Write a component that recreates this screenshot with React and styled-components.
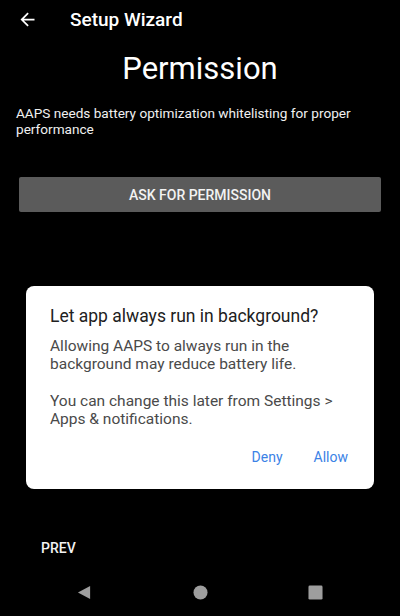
import styled, { createGlobalStyle } from "styled-components";

const GlobalStyle = createGlobalStyle`
  body {
    margin: 0;
    background: #000;
    font-family: Roboto, "Liberation Sans", sans-serif;
  }
`;

export default function App() {
  return (
    <Screen>
      <GlobalStyle />
      <TopBar>
        <BackArrow viewBox="0 0 24 24">
          <path d="M20 11H7.83l5.59-5.59L12 4l-8 8 8 8 1.41-1.41L7.83 13H20v-2z" />
        </BackArrow>
        <BarTitle>Setup Wizard</BarTitle>
      </TopBar>
      <Heading>Permission</Heading>
      <Description>
        AAPS needs battery optimization whitelisting for proper performance
      </Description>
      <AskButton>ASK FOR PERMISSION</AskButton>

      <Spacer />

      <Footer>
        <TextButton>PREV</TextButton>
      </Footer>

      <NavBar>
        <NavIcon viewBox="0 0 16 16">
          <path d="M14 1v14L1 8z" />
        </NavIcon>
        <NavIcon viewBox="0 0 16 16">
          <circle cx="8" cy="8" r="7.5" />
        </NavIcon>
        <NavIcon viewBox="0 0 16 16">
          <rect x="0.5" y="0.5" width="15" height="15" rx="1.5" />
        </NavIcon>
      </NavBar>

      {/* system dialog over the wizard */}
      <Dialog>
        <DialogTitle>Let app always run in background?</DialogTitle>
        <DialogBody>
          Allowing AAPS to always run in the background may reduce battery
          life.
        </DialogBody>
        <DialogBody $gap>
          You can change this later from Settings &gt; Apps &amp;
          notifications.
        </DialogBody>
        <DialogActions>
          <DialogAction>Deny</DialogAction>
          <DialogAction>Allow</DialogAction>
        </DialogActions>
      </Dialog>
    </Screen>
  );
}

//style
const Screen = styled.div`
  position: relative;
  width: 400px;
  height: 616px;
  background: #000;
  color: #fff;
  display: flex;
  flex-direction: column;
  overflow: hidden;
`;

const TopBar = styled.div`
  height: 38px;
  display: flex;
  align-items: center;
  padding-left: 17px;
`;

const BackArrow = styled.svg`
  width: 21px;
  height: 21px;
  fill: #fff;
`;

const BarTitle = styled.div`
  margin-left: 32px;
  font-size: 19px;
  font-weight: 500;
`;

const Heading = styled.h1`
  margin: 9px 0 0;
  text-align: center;
  font-size: 31px;
  font-weight: 400;
  line-height: 44px;
`;

const Description = styled.p`
  margin: 14px 0 0;
  padding: 0 16px;
  font-size: 13.6px;
  line-height: 16px;
  color: #f0f0f0;
`;

const AskButton = styled.button`
  margin: 40px 19px 0;
  height: 35px;
  background: #5b5b5b;
  border: none;
  border-radius: 2px;
  color: #f2f2f2;
  font-family: inherit;
  font-size: 14px;
  font-weight: 500;
`;

const Spacer = styled.div`
  flex: 1;
`;

const Footer = styled.div`
  height: 40px;
  display: flex;
  align-items: center;
  padding-left: 41px;
`;

const TextButton = styled.span`
  font-size: 14px;
  font-weight: 500;
  color: #f2f2f2;
`;

const NavBar = styled.div`
  height: 48px;
  display: flex;
  justify-content: space-between;
  align-items: center;
  padding: 0 77px 0 77px;
`;

const NavIcon = styled.svg`
  width: 15px;
  height: 15px;
  fill: #9e9e9e;
`;

const Dialog = styled.div`
  position: absolute;
  left: 26px;
  top: 286px;
  width: 348px;
  height: 203px;
  box-sizing: border-box;
  padding: 18px 24px 0;
  background: #fff;
  border-radius: 8px;
  display: flex;
  flex-direction: column;
`;

const DialogTitle = styled.div`
  font-size: 17.5px;
  line-height: 24px;
  color: #212121;
`;

const DialogBody = styled.p`
  margin: ${({ $gap }) => ($gap ? "19px" : "9px")} 0 0;
  font-size: 15.5px;
  line-height: 18px;
  color: #4a4a4a;
`;

const DialogActions = styled.div`
  margin-top: auto;
  height: 40px;
  display: flex;
  justify-content: flex-end;
  align-items: flex-start;
  gap: 31px;
  padding-right: 2px;
  box-sizing: border-box;
`;

const DialogAction = styled.span`
  font-size: 14px;
  font-weight: 400;
  color: #3b82e6;
`;
